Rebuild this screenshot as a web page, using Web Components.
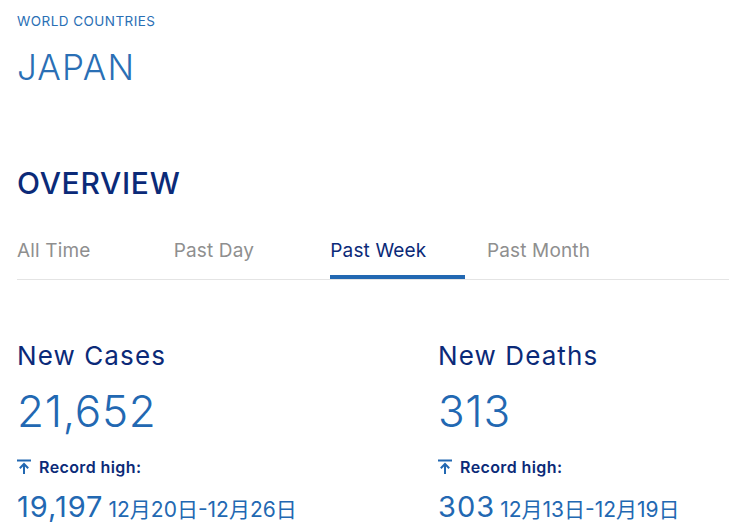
<!DOCTYPE html>
<html>
<head>
<meta charset="utf-8">
<title>Japan</title>
<style>
  html, body { margin: 0; background: #fff; overflow: hidden; }
  body { font-family: 'Inter', 'Noto Sans CJK JP', sans-serif; }
</style>
</head>
<body>
<country-page>
  <page-head eyebrow="WORLD COUNTRIES" name="JAPAN"></page-head>
  <overview-tabs active="Past Week" tabs="All Time,Past Day,Past Week,Past Month"></overview-tabs>
  <stat-grid>
    <stat-block title="New Cases" value="21,652" high="19,197" range="12月20日-12月26日"></stat-block>
    <stat-block title="New Deaths" value="313" high="303" range="12月13日-12月19日"></stat-block>
  </stat-grid>
</country-page>
<script>
class CountryPage extends HTMLElement {
  constructor() {
    super();
    this.attachShadow({ mode: 'open' }).innerHTML = `
      <style>:host { display: block; padding-left: 17px; height: 525px; box-sizing: border-box; overflow: hidden; }</style>
      <slot></slot>`;
  }
}

class PageHead extends HTMLElement {
  constructor() {
    super();
    this.attachShadow({ mode: 'open' }).innerHTML = `
      <style>
        :host { display: block; padding-top: 13px; }
        .eyebrow { font-size: 13.5px; line-height: 16px; color: #2a6fb5; letter-spacing: .45px; }
        h1 { margin: 16px 0 0; font-size: 35px; line-height: 44px; font-weight: 300; color: #2a6fb5; letter-spacing: 1.2px; }
        h2 { margin: 76px 0 0; font-size: 30px; line-height: 36px; font-weight: 500; color: #0b2a78; letter-spacing: .7px; }
      </style>
      <div class="eyebrow">${this.getAttribute('eyebrow')}</div>
      <h1>${this.getAttribute('name')}</h1>
      <h2>OVERVIEW</h2>`;
  }
}

class OverviewTabs extends HTMLElement {
  constructor() {
    super();
    const active = this.getAttribute('active');
    const tabs = this.getAttribute('tabs').split(',');
    this.attachShadow({ mode: 'open' }).innerHTML = `
      <style>
        :host { display: flex; gap: 21.67px; margin-top: 34px; height: 44px; border-bottom: 1px solid #e4e4e4; }
        .tab { width: 135px; font-size: 19px; line-height: 28px; padding-top: 2px; color: #8f8f8f; box-sizing: border-box; height: 44px; letter-spacing: .15px; }
        .tab.on { color: #0b2a78; border-bottom: 4px solid #2268b2; }
      </style>
      ${tabs.map(t => `<div class="tab ${t === active ? 'on' : ''}">${t}</div>`).join('')}`;
  }
}

class StatGrid extends HTMLElement {
  constructor() {
    super();
    this.attachShadow({ mode: 'open' }).innerHTML = `
      <style>:host { display: grid; grid-template-columns: 421px 1fr; margin-top: 58px; }</style>
      <slot></slot>`;
  }
}

class StatBlock extends HTMLElement {
  constructor() {
    super();
    this.attachShadow({ mode: 'open' }).innerHTML = `
      <style>
        :host { display: block; }
        .title { font-size: 26px; line-height: 36px; color: #0b2a78; letter-spacing: 1.1px; }
        .value { font-size: 44px; line-height: 54px; margin-top: 10px; font-weight: 300; color: #2268b2; letter-spacing: .7px; }
        .rec { display: flex; align-items: center; gap: 8px; margin-top: 19px; height: 20px; font-size: 16px; font-weight: 600; color: #0b2a78; letter-spacing: .4px; }
        .rec svg { width: 14px; height: 16px; display: block; }
        .high { display: flex; align-items: baseline; gap: 5px; margin-top: 12px; color: #2268b2; }
        .num { font-size: 29px; line-height: 36px; font-weight: 400; letter-spacing: 1px; }
        .range { font-size: 21px; line-height: 36px; }
      </style>
      <div class="title">${this.getAttribute('title')}</div>
      <div class="value">${this.getAttribute('value')}</div>
      <div class="rec">
        <svg viewBox="0 0 14 16" fill="none" stroke="#2268b2" stroke-width="2"><path d="M0 1.5h14M7 15V5M2.8 9.2 7 5l4.2 4.2"/></svg>
        <span>Record high:</span>
      </div>
      <div class="high"><span class="num">${this.getAttribute('high')}</span><span class="range">${this.getAttribute('range')}</span></div>`;
  }
}

customElements.define('country-page', CountryPage);
customElements.define('page-head', PageHead);
customElements.define('overview-tabs', OverviewTabs);
customElements.define('stat-grid', StatGrid);
customElements.define('stat-block', StatBlock);
</script>
</body>
</html>
